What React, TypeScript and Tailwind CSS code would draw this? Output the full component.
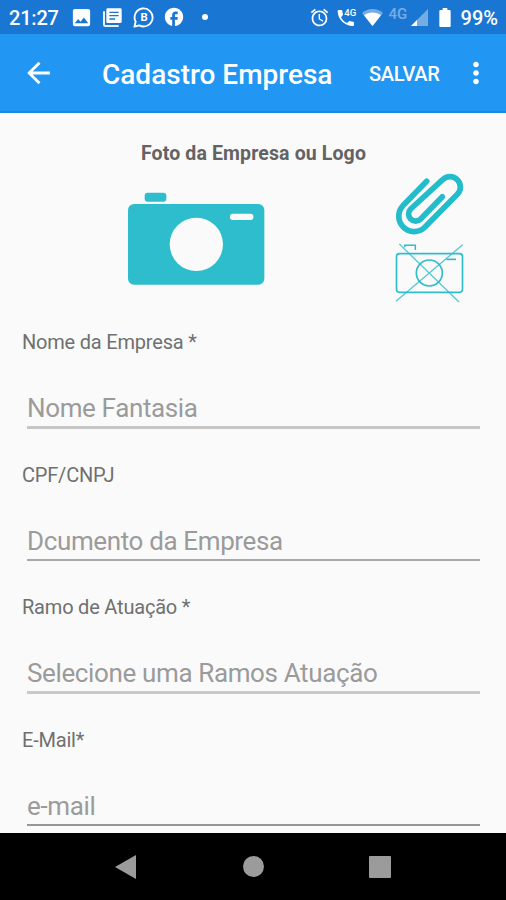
import React from "react";
import {
  MdAccessAlarm,
  MdArrowBack,
  MdFacebook,
  MdImage,
  MdMoreVert,
} from "react-icons/md";

const fields = [
  { id: "nome", label: "Nome da Empresa *", placeholder: "Nome Fantasia", box: "h-[133px]", line: "h-[3px] bg-[#c6c6c6]" },
  { id: "doc", label: "CPF/CNPJ", placeholder: "Dcumento da Empresa", box: "h-[132px]", line: "h-[2px] bg-[#a8a8a8]" },
  { id: "ramo", label: "Ramo de Atuação *", placeholder: "Selecione uma Ramos Atuação", box: "h-[133px]", line: "h-[3px] bg-[#c9c9c9]" },
  { id: "email", label: "E-Mail*", placeholder: "e-mail", box: "h-[133px]", line: "h-[2px] bg-[#979797]" },
];

const NewsIcon = () => (
  <svg className="ml-[10px] h-[19px] w-[19px]" viewBox="0 0 57 57" fill="none">
    <path d="M3 10v40a4 4 0 0 0 4 4h40" stroke="#fff" strokeWidth="6" opacity=".9" />
    <rect x="10" y="1" width="46" height="44" rx="4" fill="#fff" />
    <path d="M19 13h28M19 23h28M19 33h17" stroke="#1976d2" strokeWidth="4" />
  </svg>
);

const BusinessIcon = () => (
  <svg className="ml-[11px] h-[21px] w-[21px]" viewBox="0 0 63 63" fill="none">
    <path d="M4 59l4-15a27 27 0 1 1 11 11z" stroke="#fff" strokeWidth="5.500" strokeLinejoin="round" />
    <text x="33" y="43" textAnchor="middle" fill="#fff" fontSize="34" fontWeight="700" fontFamily="Roboto, sans-serif">B</text>
  </svg>
);

const CallIcon = () => (
  <svg className="ml-[7px] h-[20px] w-[20px]" viewBox="0 0 60 60" fill="#fff">
    <path d="M2 12c0-2 1-3 3-3h8c2 0 3 1 3 3 0 4 1 7 2 10 0 1 0 2-1 3l-5 6c4 8 10 14 18 17l6-5c1-1 2-1 3-1 3 1 6 2 9 2 2 0 3 1 3 3v7c0 2-1 3-3 3C22 57 2 36 2 12z" />
    <text x="22" y="27" fontSize="29" fontWeight="500" fontFamily="Roboto, sans-serif" textLength="36" lengthAdjust="spacingAndGlyphs">4G</text>
  </svg>
);

const WifiIcon = () => (
  <svg className="ml-[5px] h-[17px] w-[21px]" viewBox="0 0 63 51">
    <path d="M0 12C18-4 45-4 63 12L31.500 51z" fill="#fff" opacity=".4" />
    <path d="M6 19c15-11 36-11 51 0L31.500 51z" fill="#fff" />
  </svg>
);

const SignalIcon = () => (
  <svg className="ml-[2px] h-[17px] w-[17px]" viewBox="0 0 51 51">
    <path d="M51 0v51H0z" fill="#fff" opacity=".4" />
    <path d="M18 33v18H0z" fill="#fff" />
  </svg>
);

const BatteryIcon = () => (
  <svg className="ml-[11px] h-[19px] w-[12px]" viewBox="0 0 36 57" fill="#fff">
    <path d="M11 0h14v6h7a3 3 0 0 1 3 3v45a3 3 0 0 1-3 3H4a3 3 0 0 1-3-3V9a3 3 0 0 1 3-3h7z" />
  </svg>
);

const CameraIcon = () => (
  <svg className="h-[94px] w-[138px]" viewBox="0 0 414 282" fill="#2dbdcd">
    <rect x="50" y="2" width="65" height="27" rx="9" />
    <rect x="0" y="36" width="409" height="242" rx="18" />
    <circle cx="205" cy="157" r="80" fill="#fafafa" />
    <rect x="306" y="65" width="70" height="19" rx="8" fill="#fafafa" />
  </svg>
);

const ClipIcon = () => (
  <svg className="h-[63px] w-[69px]" viewBox="135 129 207 189" fill="none">
    <path
      d="M230 154L158.500 227.500A46 46 0 0 0 223.500 292.500L322 193A31 31 0 0 0 278 149L182 237A21 21 0 0 0 212 267L277 200"
      stroke="#22bccb"
      strokeWidth="17"
      strokeLinecap="round"
      strokeLinejoin="round"
    />
  </svg>
);

const NoCameraIcon = () => (
  <svg className="mt-[7px] h-[60px] w-[69px]" viewBox="135 340 207 180" fill="none" stroke="#2fbccb">
    <path d="M164 353v-6h32v14" strokeWidth="4.500" />
    <rect x="139.500" y="372" width="198" height="116" rx="9" strokeWidth="5" />
    <circle cx="238" cy="430" r="39" strokeWidth="5" />
    <path d="M289 389h29" strokeWidth="5" />
    <path d="M148 343l179 174M338 345L138 515" strokeWidth="4" opacity=".8" />
  </svg>
);

const StatusBar = () => (
  <div className="flex h-[34px] items-center bg-[#1976d2] pl-[9px] font-medium text-white">
    <span className="w-[61px] pt-[2px] text-[20px] leading-[32px] tracking-[-0.2px]">21:27</span>
    <MdImage className="h-[23px] w-[23px]" />
    <NewsIcon />
    <BusinessIcon />
    <MdFacebook className="ml-[9px] h-[22px] w-[22px]" />
    <span className="ml-[17px] h-[6px] w-[6px] rounded-full bg-white" />
    <div className="ml-auto flex items-center pr-[8px]">
      <MdAccessAlarm className="h-[21px] w-[21px]" />
      <CallIcon />
      <WifiIcon />
      <span className="mb-[6px] ml-[6px] w-[20px] text-[15px] leading-none opacity-40">4G</span>
      <SignalIcon />
      <BatteryIcon />
      <span className="ml-[10px] pt-[2px] text-[20px] leading-[32px]">99%</span>
    </div>
  </div>
);

const AppBar = () => (
  <header className="flex h-[79px] items-center border-b-2 border-[#1c87e5] bg-[#2196f3] font-medium text-white">
    <MdArrowBack className="ml-[21px] mt-px h-[34px] w-[35px]" />
    <h1 className="ml-[46px] w-[267px] whitespace-nowrap pt-[4px] text-[28px] leading-[36px]">Cadastro Empresa</h1>
    <button className="pt-[2px] text-[20px] leading-none tracking-[-0.3px]">SALVAR</button>
    <MdMoreVert className="ml-[19px] mt-px h-[34px] w-[34px]" />
  </header>
);

const NavBar = () => (
  <nav className="flex h-[67px] items-center justify-between bg-black px-[115px]">
    <svg className="h-[24px] w-[22px]" viewBox="0 0 22 24" fill="#9b9b9b">
      <path d="M0 12L21 0v24z" />
    </svg>
    <span className="h-[21px] w-[21px] rounded-full bg-[#9b9b9b]" />
    <span className="h-[22px] w-[22px] rounded-[1px] bg-[#9b9b9b]" />
  </nav>
);

const App: React.FC = () => {
  return (
    <div className="flex h-[900px] w-[506px] flex-col overflow-hidden bg-[#fafafa] font-['Roboto',sans-serif]">
      <StatusBar />
      <AppBar />

      <main className="flex h-[720px] flex-col overflow-hidden">
        {/* Foto / logo */}
        <section className="h-[217px] shrink-0 pt-[28px]">
          <h2 className="h-[24px] pl-px text-center text-[19.500px] font-bold leading-[26px] tracking-[0.13px] text-[#636363]">
            Foto da Empresa ou Logo
          </h2>
          <div className="flex justify-between pl-[128px] pr-[42px] pt-[8px]">
            <div className="pt-[19px]">
              <CameraIcon />
            </div>
            <div className="flex flex-col">
              <ClipIcon />
              <NoCameraIcon />
            </div>
          </div>
        </section>

        {/* Campos */}
        {fields.map((f) => (
          <div key={f.id} className={`shrink-0 pl-[22px] pr-[26px] ${f.box}`}>
            <label htmlFor={f.id} className="block h-[24px] text-[20px] leading-[25px] tracking-[-0.2px] text-[#707070]">
              {f.label}
            </label>
            <div className="ml-[5px] pt-[37px]">
              <input
                id={f.id}
                placeholder={f.placeholder}
                className="mb-px block h-[34px] w-full bg-transparent text-[26px] leading-[34px] tracking-[-0.37px] outline-none placeholder:text-[#9b9b9b]"
              />
              <div className={f.line} />
            </div>
          </div>
        ))}
      </main>

      <NavBar />
    </div>
  );
};

export default App;
